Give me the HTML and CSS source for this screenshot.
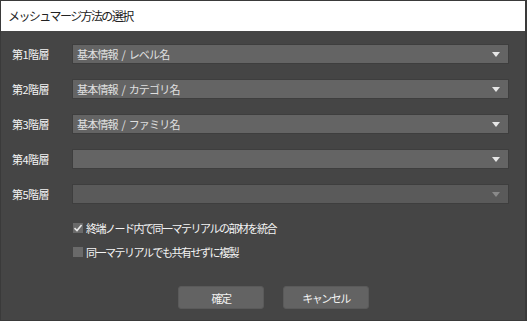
FILE: index.html
```html
<!DOCTYPE html>
<html lang="ja">
<head>
<meta charset="utf-8">
<link rel="stylesheet" href="styles.css">
</head>
<body>
<div class="window">
  <div class="titlebar">メッシュマージ方法の選択</div>
  <div class="content">
    <div class="rows">
      <div class="row"><span class="label">第1階層</span><div class="select"><span class="val">基本情報 / レベル名</span><span class="arrow"></span></div></div>
      <div class="row"><span class="label">第2階層</span><div class="select"><span class="val">基本情報 / カテゴリ名</span><span class="arrow"></span></div></div>
      <div class="row"><span class="label">第3階層</span><div class="select"><span class="val">基本情報 / ファミリ名</span><span class="arrow"></span></div></div>
      <div class="row"><span class="label">第4階層</span><div class="select"><span class="val"></span><span class="arrow"></span></div></div>
      <div class="row"><span class="label">第5階層</span><div class="select disabled"><span class="val"></span><span class="arrow"></span></div></div>
    </div>
    <div class="checks">
      <label class="check"><span class="box checked"><svg width="10" height="10" viewBox="0 0 10 10"><path d="M1.5 5.2 L4 7.6 L8.6 2" fill="none" stroke="#e8e8e8" stroke-width="1.6"/></svg></span>終端ノード内で同一マテリアルの部材を統合</label>
      <label class="check"><span class="box"></span>同一マテリアルでも共有せずに複製</label>
    </div>
    <div class="buttons">
      <button class="btn">確定</button>
      <button class="btn">キャンセル</button>
    </div>
  </div>
</div>
</body>
</html>
```
FILE: styles.css
```css
* { box-sizing: border-box; }
html, body { margin: 0; padding: 0; }
body {
  width: 527px;
  height: 321px;
  background: #454545;
  font-family: "Noto Sans CJK JP", "Noto Sans", sans-serif;
  font-size: 11px;
  color: #f4f4f4;
  overflow: hidden;
}
.window {
  width: 527px;
  height: 321px;
  border: 1px solid #3a3a3a;
  border-right-width: 2px;
  background: #454545;
  display: flex;
  flex-direction: column;
}
.titlebar {
  height: 30px;
  background: #ffffff;
  color: #222;
  font-size: 12px;
  letter-spacing: -1.6px;
  line-height: 30px;
  padding-left: 7px;
  flex: none;
}
.content {
  padding: 13px 0 0 11px;
  display: flex;
  flex-direction: column;
}
.rows {
  display: flex;
  flex-direction: column;
  gap: 15px;
}
.row {
  display: flex;
  align-items: center;
  height: 20px;
}
.label {
  width: 60px;
  flex: none;
  line-height: 20px;
  letter-spacing: -0.5px;
}
.select {
  width: 437px;
  height: 20px;
  background: #646464;
  border: 1px solid #3e3e3e;
  display: flex;
  align-items: center;
  justify-content: space-between;
  padding: 0 8px 0 4px;
  color: #e0e0e0;
}
.select .val { line-height: 18px; letter-spacing: -0.8px; word-spacing: 2px; }
.arrow {
  width: 0;
  height: 0;
  border-left: 4px solid transparent;
  border-right: 4px solid transparent;
  border-top: 5px solid #e6e6e6;
}
.select.disabled { background: #5a5a5a; }
.select.disabled .arrow { border-top-color: #8a8a8a; }
.checks {
  margin-top: 17px;
  padding-left: 61px;
  display: flex;
  flex-direction: column;
  gap: 10px;
}
.check {
  display: flex;
  align-items: center;
  height: 14px;
  gap: 3px;
  letter-spacing: -1.5px;
}
.box {
  width: 10px;
  height: 10px;
  background: #6a6a6a;
  display: flex;
  align-items: center;
  justify-content: center;
  flex: none;
}
.buttons {
  margin-top: 27px;
  display: flex;
  gap: 19px;
  padding-left: 166px;
}
.btn {
  width: 86px;
  height: 23px;
  background: #636363;
  border: 1px solid #5a5a5a;
  border-radius: 3px;
  color: #f2f2f2;
  font-family: inherit;
  font-size: 11px;
  letter-spacing: -1.5px;
  padding: 0;
}
```
